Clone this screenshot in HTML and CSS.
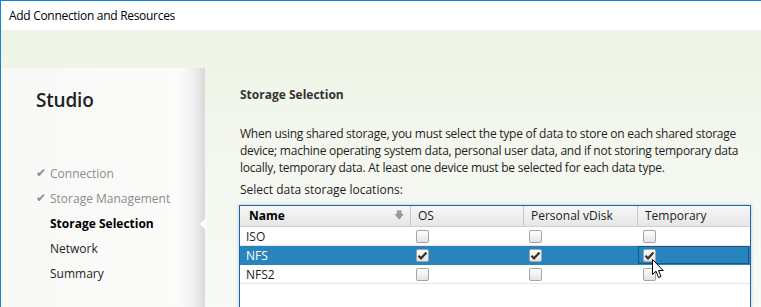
FILE: index.html
```html
<!DOCTYPE html>
<html lang="en">
<head>
  <meta charset="UTF-8">
  <title>Add Connection and Resources</title>
  <link rel="stylesheet" href="styles.css">
</head>
<body>
  <div class="window">
    <div class="titlebar">Add Connection and Resources</div>

    <div class="main">
      <aside class="sidebar">
        <h1 class="brand">Studio</h1>
        <ul class="steps">
          <li class="done"><span class="tick">&#10004;</span>Connection</li>
          <li class="done"><span class="tick">&#10004;</span>Storage Management</li>
          <li class="current">Storage Selection</li>
          <li>Network</li>
          <li>Summary</li>
        </ul>
      </aside>

      <section class="content">
        <h2>Storage Selection</h2>
        <p class="intro">When using shared storage, you must select the type of data to store on each shared storage<br>device; machine operating system data, personal user data, and if not storing temporary data<br>locally, temporary data. At least one device must be selected for each data type.</p>
        <p class="label">Select data storage locations:</p>

        <div class="grid">
          <div class="grid-head">
            <div class="col col-name">Name <span class="sort">&#129095;</span></div>
            <div class="col">OS</div>
            <div class="col">Personal vDisk</div>
            <div class="col">Temporary</div>
          </div>

          <div class="row">
            <div class="cell cell-name">ISO</div>
            <div class="cell"><span class="box"></span></div>
            <div class="cell"><span class="box"></span></div>
            <div class="cell"><span class="box"></span></div>
          </div>

          <div class="row selected">
            <div class="cell cell-name">NFS</div>
            <div class="cell"><span class="box checked"><svg viewBox="0 0 13 13" width="13" height="13"><path d="M2.5 6.8 L5 9.3 L10.5 3.5" fill="none" stroke="#333" stroke-width="2.2"/></svg></span></div>
            <div class="cell"><span class="box checked"><svg viewBox="0 0 13 13" width="13" height="13"><path d="M2.5 6.8 L5 9.3 L10.5 3.5" fill="none" stroke="#333" stroke-width="2.2"/></svg></span></div>
            <div class="cell focused"><span class="box checked"><svg viewBox="0 0 13 13" width="13" height="13"><path d="M2.5 6.8 L5 9.3 L10.5 3.5" fill="none" stroke="#333" stroke-width="2.2"/></svg></span></div>
          </div>

          <div class="row">
            <div class="cell cell-name">NFS2</div>
            <div class="cell"><span class="box"></span></div>
            <div class="cell"><span class="box"></span></div>
            <div class="cell"><span class="box"></span></div>
          </div>
        </div>
      </section>
    </div>

    <svg class="cursor" width="13" height="20" viewBox="0 0 13 20">
      <path d="M0.5 0.5 L0.5 15.5 L4 12.2 L6.6 18.5 L9 17.5 L6.5 11.5 L11.2 11.5 Z" fill="#fff" stroke="#000" stroke-width="1"/>
    </svg>
  </div>
</body>
</html>
```

FILE: styles.css
```css
html, body {
  margin: 0;
  height: 100%;
  overflow: hidden;
}

body {
  font-family: 'Open Sans', 'Noto Sans', sans-serif;
  font-size: 12px;
  color: #1e1e1e;
  background: #fff;
}

.window {
  position: relative;
  height: 100%;
  border-top: 1px solid #1883d7;
  border-left: 1px solid #1883d7;
  box-sizing: border-box;
  display: flex;
  flex-direction: column;
  overflow: hidden;
}

.titlebar {
  height: 29px;
  line-height: 29px;
  padding-left: 8px;
  background: #fff;
  color: #000;
  letter-spacing: -0.3px;
}

.main {
  flex: 1;
  min-height: 0;
  overflow: hidden;
  display: flex;
  padding-top: 38px;
  background: linear-gradient(180deg, #edf3e5 0%, #f3f7ee 40%, #f8faf5 100%);
}

.sidebar {
  width: 204px;
  flex-shrink: 0;
  padding-left: 35px;
  box-sizing: border-box;
  background: linear-gradient(90deg, #f8f9f6 0%, #fbfbfa 88%, #eeeeee 95%, #d9d9d9 100%);
}

.brand {
  margin: 18px 0 0;
  font-size: 19px;
  font-weight: 600;
  line-height: 28px;
  color: #222;
  letter-spacing: -0.2px;
}

.steps {
  list-style: none;
  margin: 47px 0 0;
  padding: 0;
}

.steps li {
  position: relative;
  line-height: 25px;
  padding-left: 14px;
  color: #1e1e1e;
}

.steps li.done {
  color: #8c8c8c;
}

.steps li.current {
  font-weight: 700;
  color: #000;
}

.steps li.current::after {
  content: '';
  position: absolute;
  right: -1px;
  top: 7px;
  border-top: 6px solid transparent;
  border-bottom: 6px solid transparent;
  border-right: 6px solid #fff;
}

.tick {
  position: absolute;
  left: 0;
  top: -1px;
  font-size: 12px;
  color: #8c8c8c;
}

.content {
  flex: 1;
  padding: 19px 0 0 35px;
}

.content h2 {
  margin: 0;
  font-size: 12px;
  font-weight: 700;
  line-height: 16px;
  color: #333;
}

.intro {
  margin: 22px 0 0;
  line-height: 17px;
  white-space: nowrap;
  letter-spacing: -0.25px;
}

.label {
  margin: 6px 0 0;
  line-height: 16px;
}

.grid {
  margin: 7px 0 0 -1px;
  width: 512px;
  height: 140px;
  border: 1px solid #2463a8;
  box-sizing: border-box;
  background: #fff;
  box-shadow: 0 0 3px rgba(60, 130, 200, 0.45);
}

.grid-head {
  display: grid;
  grid-template-columns: 171px 113px 114px 112px;
  height: 20px;
  background: linear-gradient(180deg, #f7f7f7 0%, #e6e6e6 100%);
  border-bottom: 1px solid #d0d0d0;
}

.col {
  line-height: 19px;
  padding-left: 7px;
  border-right: 1px solid #c8c8c8;
}

.col:last-child {
  border-right: none;
}

.col-name {
  position: relative;
  padding-left: 9px;
  font-weight: 700;
  color: #000;
}

.sort {
  position: absolute;
  right: 6px;
  top: 0;
  font-size: 10px;
  color: #999;
  font-weight: 400;
}

.row {
  display: grid;
  grid-template-columns: 171px 113px 114px 112px;
  height: 18px;
  border-bottom: 1px solid #e6e6e6;
}

.cell {
  display: flex;
  align-items: center;
  padding-left: 5px;
}

.cell-name {
  padding-left: 6px;
}

.row.selected {
  background: #2784bd;
  color: #fff;
  border-bottom-color: #2784bd;
}

.cell.focused {
  box-shadow: inset 0 0 0 1px #18578c;
  margin-right: 1px;
}

.box {
  display: block;
  width: 13px;
  height: 13px;
  box-sizing: border-box;
  border: 1px solid #a5a5a5;
  border-radius: 2px;
  background: linear-gradient(180deg, #ffffff 0%, #e4e4e4 100%);
}

.box svg {
  display: block;
  margin: -1px;
}

.cursor {
  position: absolute;
  left: 651px;
  top: 258px;
}
```
